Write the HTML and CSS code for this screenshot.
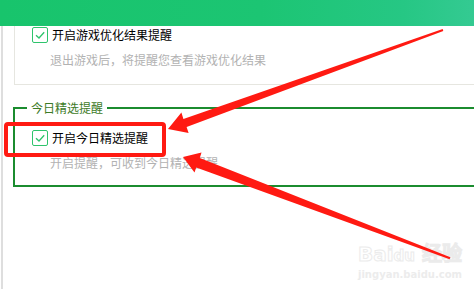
FILE: index.html
```html
<!DOCTYPE html>
<html lang="zh-CN">
<head>
<meta charset="utf-8">
<link rel="stylesheet" href="styles.css">
</head>
<body>
<div class="header"></div>
<div class="panel">
  <div class="box-top">
    <div class="row">
      <span class="check"><svg width="16" height="16" viewBox="0 0 16 16"><polyline points="4,8.2 7,11 12.2,5.2" fill="none" stroke="#2ec46c" stroke-width="1.3"/></svg></span>
      <span class="label">开启游戏优化结果提醒</span>
    </div>
    <div class="hint">退出游戏后，将提醒您查看游戏优化结果</div>
  </div>
  <fieldset class="box-today">
    <legend class="legend">今日精选提醒</legend>
    <div class="row">
      <span class="check"><svg width="16" height="16" viewBox="0 0 16 16"><polyline points="4,8.2 7,11 12.2,5.2" fill="none" stroke="#2ec46c" stroke-width="1.3"/></svg></span>
      <span class="label">开启今日精选提醒</span>
    </div>
    <div class="hint">开启提醒，可收到今日精选提醒</div>
  </fieldset>
</div>
<div class="watermark">
  <div class="wm-logo">Bai<span class="wm-du">du</span> 经验</div>
  <div class="wm-url">jingyan.baidu.com</div>
</div>
<div class="redbox"></div>
<svg class="arrows" width="474" height="289" viewBox="0 0 474 289">
  <polygon fill="#ff1a12" points="443.3,31 186.6,126.9 188.6,133 168,129 181.4,112.6 183.4,119 442.7,29"/>
  <polygon fill="#ff1a12" points="450.4,257.2 199.8,158 201.5,152.5 183,157 194.5,172.5 196.2,167.4 449.6,259.2"/>
</svg>
</body>
</html>
```

FILE: styles.css
```css
html, body {
  margin: 0;
  padding: 0;
  width: 474px;
  height: 289px;
  overflow: hidden;
  background: #ffffff;
  font-family: "Noto Sans CJK SC", "Noto Sans", sans-serif;
  font-size: 12px;
  position: relative;
}

.header {
  height: 26px;
  background: linear-gradient(90deg, #18c46c 0%, #1cc573 55%, #26c784 85%, #34ca92 100%);
}

.panel {
  margin-left: 1px;
  border-left: 2px solid #dedede;
  height: 263px;
}

.box-top {
  margin-left: 11px;
  border-left: 1px solid #e6e6e0;
  border-bottom: 1px solid #e6e6e0;
  padding: 1px 0 16px 17px;
}

.row {
  display: flex;
  align-items: center;
  gap: 4px;
  height: 16px;
}

.check {
  width: 14px;
  height: 14px;
  border: 1px solid #2ec46c;
  border-radius: 2px;
  background: #fff;
  overflow: hidden;
}

.check svg {
  display: block;
  margin: -1px 0 0 -1px;
}

.label {
  color: #000000;
  font-size: 12px;
  line-height: 16px;
}

.hint {
  margin-top: 9px;
  padding-left: 18px;
  color: #b2b2b2;
  font-size: 12px;
  line-height: 16px;
}

.box-today {
  margin: 15px 0 0 10px;
  border: 2px solid #1b8c2f;
  border-right: 0;
  padding: 14px 0 14px 17px;
  min-width: 0;
}

.legend {
  margin-left: -5px;
  padding: 0 4px;
  color: #3d7b27;
  font-size: 12px;
  line-height: 16px;
}

.redbox {
  position: absolute;
  left: 4px;
  top: 122px;
  width: 154px;
  height: 27px;
  border: 4px solid #ff1a12;
  border-radius: 4px;
}

.arrows {
  position: absolute;
  left: 0;
  top: 0;
}

.watermark {
  position: absolute;
  left: 358px;
  top: 242px;
  font-family: "DejaVu Sans", sans-serif;
}

.wm-logo {
  font-size: 20px;
  font-weight: bold;
  line-height: 24px;
  color: transparent;
  -webkit-text-stroke: 1px #ebebeb;
}

.wm-du {
  font-size: 15px;
}

.wm-url {
  font-size: 10px;
  line-height: 14px;
  color: #ececec;
  font-weight: bold;
}
```
